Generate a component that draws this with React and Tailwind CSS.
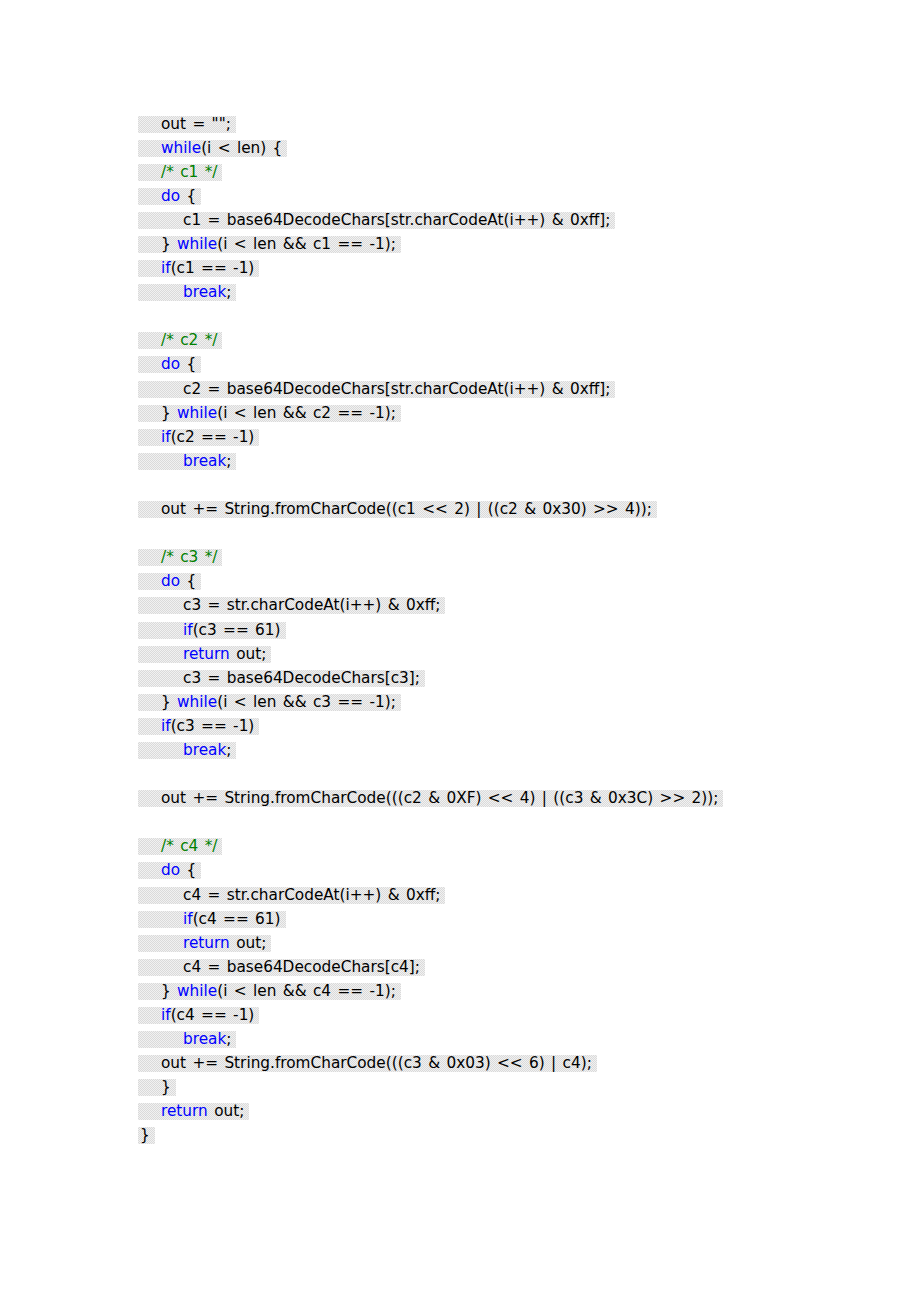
import React from "react";

const K = ({ children }) => <span className="text-[#0000ff]">{children}</span>;
const C = ({ children }) => <span className="text-[#008000]">{children}</span>;

const lines = [
  [1, <>out = "";</>],
  [1, <><K>while</K>(i &lt; len) {"{"}</>],
  [1, <C>/* c1 */</C>],
  [1, <><K>do</K>{" {"}</>],
  [2, <>c1 = base64DecodeChars[str.charCodeAt(i++) &amp; 0xff];</>],
  [1, <>{"} "}<K>while</K>(i &lt; len &amp;&amp; c1 == -1);</>],
  [1, <><K>if</K>(c1 == -1)</>],
  [2, <><K>break</K>;</>],
  null,
  [1, <C>/* c2 */</C>],
  [1, <><K>do</K>{" {"}</>],
  [2, <>c2 = base64DecodeChars[str.charCodeAt(i++) &amp; 0xff];</>],
  [1, <>{"} "}<K>while</K>(i &lt; len &amp;&amp; c2 == -1);</>],
  [1, <><K>if</K>(c2 == -1)</>],
  [2, <><K>break</K>;</>],
  null,
  [1, <>out += String.fromCharCode((c1 &lt;&lt; 2) | ((c2 &amp; 0x30) &gt;&gt; 4));</>],
  null,
  [1, <C>/* c3 */</C>],
  [1, <><K>do</K>{" {"}</>],
  [2, <>c3 = str.charCodeAt(i++) &amp; 0xff;</>],
  [2, <><K>if</K>(c3 == 61)</>],
  [2, <><K>return</K>{" out;"}</>],
  [2, <>c3 = base64DecodeChars[c3];</>],
  [1, <>{"} "}<K>while</K>(i &lt; len &amp;&amp; c3 == -1);</>],
  [1, <><K>if</K>(c3 == -1)</>],
  [2, <><K>break</K>;</>],
  null,
  [1, <>out += String.fromCharCode(((c2 &amp; 0XF) &lt;&lt; 4) | ((c3 &amp; 0x3C) &gt;&gt; 2));</>],
  null,
  [1, <C>/* c4 */</C>],
  [1, <><K>do</K>{" {"}</>],
  [2, <>c4 = str.charCodeAt(i++) &amp; 0xff;</>],
  [2, <><K>if</K>(c4 == 61)</>],
  [2, <><K>return</K>{" out;"}</>],
  [2, <>c4 = base64DecodeChars[c4];</>],
  [1, <>{"} "}<K>while</K>(i &lt; len &amp;&amp; c4 == -1);</>],
  [1, <><K>if</K>(c4 == -1)</>],
  [2, <><K>break</K>;</>],
  [1, <>out += String.fromCharCode(((c3 &amp; 0x03) &lt;&lt; 6) | c4);</>],
  [1, <>{"}"}</>],
  [1, <><K>return</K>{" out;"}</>],
  [0, <>{"}"}</>],
];

const hatch =
  "bg-[#e6e6e6] bg-[conic-gradient(#dadada_25%,#f1f1f1_0_50%,#dadada_0_75%,#f1f1f1_0)] bg-[length:2px_2px]";

export default function App() {
  return (
    <div
      className="w-[920px] h-[1302px] bg-white pt-[112px] pl-[138px] text-black text-[15.3px] [word-spacing:1.5px]"
      style={{ fontFamily: '"DejaVu Sans", Verdana, sans-serif' }}
    >
      {lines.map((l, i) => (
        <div key={i} className="h-[24.1px] flex items-center">
          {l && (
            <span
              className={`${hatch} inline-block h-[17px] leading-[17px] pl-[2px] pr-[5px] whitespace-pre`}
            >
              {l[0] >= 1 && <span className="inline-block w-[21px]" />}
              {l[0] >= 2 && <span className="inline-block w-[22px]" />}
              {l[1]}
            </span>
          )}
        </div>
      ))}
    </div>
  );
}
